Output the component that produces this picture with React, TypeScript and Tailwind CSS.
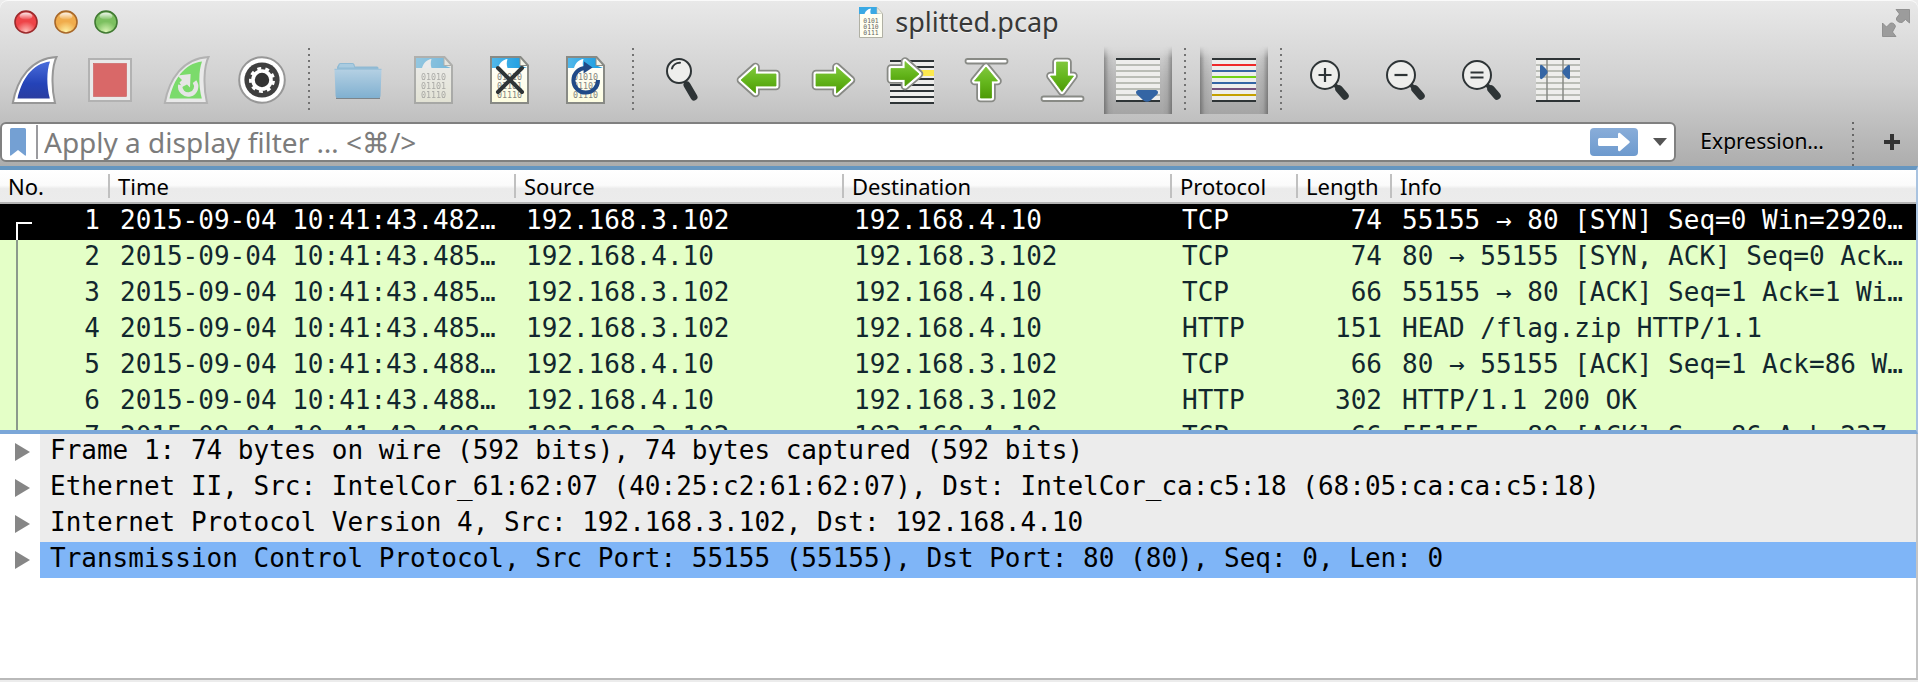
import React from "react";

type IconProps = { className?: string };

function Svg({ children, className = "size-12" }: { children: React.ReactNode; className?: string }) {
  return (
    <svg viewBox="0 0 48 48" className={className} aria-hidden="true">
      {children}
    </svg>
  );
}

const FIN_OUTER = "M2.8 47 C7 23 21 2.5 46.5 1 C42 10 41 30 45 47 Z";
const FIN_INNER = "M7.5 42.5 C11.5 24 22 7.5 40 5.5 C36.5 15 36.5 30 39.8 42.5 Z";

function StartIcon() {
  return (
    <Svg>
      <defs>
        <linearGradient id="fin-blue" x1="0" y1="0" x2="0" y2="1">
          <stop offset="0" stopColor="#4a6ddb" />
          <stop offset="0.6" stopColor="#2443b8" />
          <stop offset="1" stopColor="#2a3da0" />
        </linearGradient>
      </defs>
      <path d={FIN_OUTER} fill="#fff" stroke="#979797" strokeWidth="2" />
      <path d={FIN_INNER} fill="url(#fin-blue)" />
    </Svg>
  );
}

function StopIcon() {
  return (
    <Svg>
      <rect x="3" y="3" width="42" height="42" fill="#e9e9e9" stroke="#b2b2b2" strokeWidth="2" />
      <rect x="7.5" y="7.5" width="33" height="33" fill="#d96868" stroke="#c95a5a" strokeWidth="0.6" />
    </Svg>
  );
}

function RestartIcon() {
  return (
    <Svg>
      <path d={FIN_OUTER} fill="#e9e9e9" stroke="#b2b2b2" strokeWidth="2" />
      <path d={FIN_INNER} fill="#7bdb6b" />
      <path d="M32.5 25.6 A8 8 0 1 1 18.3 29" fill="none" stroke="#e6e6e6" strokeWidth="4.4" />
      <path d="M15.5 19.5 L28.6 18 L28 31.5 L25 28.5 L20 31 L17.5 26.5 L20 24 Z" fill="#e6e6e6" />
    </Svg>
  );
}

function OptionsIcon() {
  return (
    <Svg>
      <circle cx="24" cy="24" r="22.8" fill="#fff" stroke="#979797" strokeWidth="2" />
      <circle cx="24" cy="24" r="17.6" fill="#3f3f3f" />
      <circle cx="24" cy="24" r="9" fill="#333" stroke="#fff" strokeWidth="3.6" />
      <circle cx="24" cy="24" r="11.6" fill="none" stroke="#fff" strokeWidth="2.8" strokeDasharray="3.9 4.2" strokeDashoffset="-1" />
    </Svg>
  );
}

function FolderIcon() {
  return (
    <Svg>
      <defs>
        <linearGradient id="folder-front" x1="0" y1="0" x2="0" y2="1">
          <stop offset="0" stopColor="#b4d0e3" />
          <stop offset="1" stopColor="#80b0d0" />
        </linearGradient>
      </defs>
      <path d="M2 41.5 H46 V43 H2 Z" fill="#7d8489" />
      <path d="M3 18 V11 L5 7.5 Q5.5 7 6.5 7 H18.5 Q20 7 20.5 8.5 L21 10.5 H43 Q44.5 10.5 44.5 12 V18 Z" fill="#8fbad4" />
      <path d="M4.5 11.5 L6 8 H19 L20.5 11.5 Z" fill="#a9cbe0" />
      <path d="M0.5 13.5 H47.5 L46.5 40 Q46.5 42 44.5 42 H3.5 Q1.7 42 1.6 40 Z" fill="url(#folder-front)" />
      <path d="M0.5 13.3 H47.5" stroke="#9ec3da" strokeWidth="1.2" />
    </Svg>
  );
}

function DocBase({ id }: { id: string }) {
  return (
    <>
      <defs>
        <linearGradient id={id + "-sky"} x1="0" y1="0" x2="1" y2="0">
          <stop offset="0" stopColor="#52b8ea" />
          <stop offset="1" stopColor="#189be0" />
        </linearGradient>
        <linearGradient id={id + "-page"} x1="0" y1="0" x2="0" y2="1">
          <stop offset="0" stopColor="#ffffff" />
          <stop offset="1" stopColor="#fdfde0" />
        </linearGradient>
      </defs>
      <path d="M5 1 H34.5 L42 9.5 V47 H5 Z" fill={"url(#" + id + "-page)"} />
      <path d="M6 2 H34 L34.5 9.5 L41 12 H6 Z" fill={"url(#" + id + "-sky)"} />
      <path d="M12 12 C13.5 7 17 3.5 21.5 3 C20.5 6 20.5 9 21.5 12 Z" fill="#fff" />
      <path d="M34 1.5 V9.5 H41.5 Z" fill="#f4f4e8" />
      <path d="M34 2 V9.5 H41.5" fill="none" stroke="#888a85" strokeWidth="1" />
      <path d="M5 1 H34.5 L42 9.5 V47 H5 Z" fill="none" stroke="#888a85" strokeWidth="2" />
      <g fill="#85857e" fontFamily="'DejaVu Sans Mono', monospace" fontSize="8.4" textAnchor="middle">
        <text x="23.5" y="24">01010</text>
        <text x="23.5" y="33">01101</text>
        <text x="23.5" y="42">01110</text>
      </g>
    </>
  );
}

function SaveIcon() {
  return (
    <Svg>
      <g opacity="0.5">
        <DocBase id="save" />
      </g>
    </Svg>
  );
}

function CloseFileIcon() {
  return (
    <Svg>
      <DocBase id="close" />
      <path d="M12 12 L36 36 M36 12 L12 36" stroke="#2e3436" strokeWidth="4" strokeLinecap="round" />
    </Svg>
  );
}

function ReloadIcon() {
  return (
    <Svg>
      <DocBase id="reload" />
      <path d="M36 24 A12.3 12.3 0 1 1 24 12" fill="none" stroke="#204a87" strokeWidth="4" />
      <path d="M22 5.5 L30.5 11.5 L21.5 17.5 Z" fill="#204a87" />
    </Svg>
  );
}

function FindIcon() {
  return (
    <Svg>
      <path d="M29 29 L36 41" stroke="#2e3436" strokeWidth="7" strokeLinecap="round" />
      <path d="M26 24 L29 30" stroke="#2e3436" strokeWidth="3" />
      <circle cx="21" cy="15" r="12" fill="#eeeeec" stroke="#2e3436" strokeWidth="2" />
      <path d="M14 12.5 A8 8 0 0 1 22 6.8" fill="none" stroke="#2e3436" strokeWidth="2" strokeLinecap="round" />
    </Svg>
  );
}

function Green() {
  return (
    <defs>
      <linearGradient id="green" x1="0" y1="0" x2="0" y2="1">
        <stop offset="0" stopColor="#80c63c" />
        <stop offset="0.5" stopColor="#64b61c" />
        <stop offset="1" stopColor="#4e9a06" />
      </linearGradient>
    </defs>
  );
}

function ArrowShape({ d }: { d: string }) {
  return (
    <>
      <Green />
      <path d={d} fill="#888a85" stroke="#888a85" strokeWidth="8.6" strokeLinejoin="round" />
      <path d={d} fill="#fff" stroke="#fff" strokeWidth="5" strokeLinejoin="round" />
      <path d={d} fill="url(#green)" stroke="url(#green)" strokeWidth="0.8" strokeLinejoin="round" />
    </>
  );
}

function BackIcon() {
  return (
    <Svg>
      <ArrowShape d="M7 24 L21.5 11 V18 H42 V30 H21.5 V37 Z" />
    </Svg>
  );
}

function ForwardIcon() {
  return (
    <Svg>
      <ArrowShape d="M41 24 L26.5 11 V18 H6 V30 H26.5 V37 Z" />
    </Svg>
  );
}

function GoToIcon() {
  return (
    <Svg>
      <rect x="4" y="4" width="44" height="44" fill="#eeeeec" />
      <rect x="24" y="14" width="24" height="6" fill="#fce94f" />
      <path d="M4 5 H48 M4 11 H48 M4 23 H48 M4 29 H48 M4 35 H48 M4 41 H48 M4 47 H48" stroke="#2e3436" strokeWidth="2" />
      <ArrowShape d="M33 18 L19 5.5 V12.5 H5 V23.5 H19 V30 Z" />
    </Svg>
  );
}

function FirstIcon() {
  return (
    <Svg>
      <rect x="3.5" y="3" width="42" height="4.5" rx="2.2" fill="#fff" stroke="#888a85" strokeWidth="1.8" />
      <ArrowShape d="M24 11 L12.5 25 H18.5 V42 H29.5 V25 H35.5 Z" />
    </Svg>
  );
}

function LastIcon() {
  return (
    <Svg>
      <rect x="3.5" y="40.5" width="42" height="4.5" rx="2.2" fill="#fff" stroke="#888a85" strokeWidth="1.8" />
      <ArrowShape d="M24 35.5 L12.5 20 H18.5 V6 H29.5 V20 H35.5 Z" />
    </Svg>
  );
}

function AutoScrollIcon() {
  return (
    <Svg>
      <rect x="2" y="2" width="44" height="44" fill="#eeeeec" />
      <path d="M2 9 H46 M2 15 H46 M2 21 H46 M2 27 H46 M2 33 H46 M2 39 H46" stroke="#babdb6" strokeWidth="2" />
      <path d="M2 3 H46 M2 45 H46" stroke="#2e3436" strokeWidth="2" />
      <path d="M24 34 H42 Q45 35 43.5 38 L36.5 44.5 Q33 47 29.5 44.5 L22.5 38 Q21 35 24 34 Z" fill="#3465a4" />
    </Svg>
  );
}

const RULES = [
  { y: 3, color: "#2e3436" },
  { y: 9, color: "#ef2929" },
  { y: 15, color: "#3465a4" },
  { y: 21, color: "#73d216" },
  { y: 27, color: "#3465a4" },
  { y: 33, color: "#75507b" },
  { y: 39, color: "#c4a000" },
  { y: 45, color: "#2e3436" },
];

function ColorizeIcon() {
  return (
    <Svg>
      <rect x="2" y="2" width="44" height="44" fill="#eeeeec" />
      {RULES.map((r) => (
        <path key={r.y} d={"M2 " + r.y + " H46"} stroke={r.color} strokeWidth="2" />
      ))}
    </Svg>
  );
}

function ZoomIcon({ mark }: { mark: string }) {
  return (
    <Svg>
      <path d="M33 33 L39 40" stroke="#2e3436" strokeWidth="7.5" strokeLinecap="round" />
      <path d="M28 28 L33 33" stroke="#2e3436" strokeWidth="4" />
      <circle cx="19" cy="19" r="14" fill="#eeeeec" stroke="#2e3436" strokeWidth="2" />
      <path d={mark} stroke="#2e3436" strokeWidth="2.2" />
    </Svg>
  );
}

function ResizeIcon() {
  return (
    <Svg>
      <rect x="2" y="2" width="44" height="44" fill="#eeeeec" />
      <path d="M2 9 H46 M2 15 H46 M2 21 H46 M2 27 H46 M2 33 H46 M2 39 H46" stroke="#babdb6" strokeWidth="2" />
      <path d="M13 2 V46 M29 2 V46" stroke="#888a85" strokeWidth="1.5" />
      <path d="M2 3 H46 M2 45 H46" stroke="#2e3436" strokeWidth="2" />
      <path d="M6 10 Q6.5 8 8.5 9.5 Q11.5 12 13.5 15 V17 Q11.5 20 8.5 22.5 Q6.5 24 6 22 Z" fill="#3465a4" />
      <path d="M36 10 Q35.5 8 33.5 9.5 Q30.5 12 28.5 15 V17 Q30.5 20 33.5 22.5 Q35.5 24 36 22 Z" fill="#3465a4" />
    </Svg>
  );
}

function TitleDocIcon({ className }: IconProps) {
  return (
    <svg viewBox="0 0 24 31" className={className} aria-hidden="true">
      <path d="M0.5 0.5 H18 L23.5 6.5 V30.5 H0.5 Z" fill="#fffff2" stroke="#b0b0a4" strokeWidth="1" />
      <path d="M0 0 H18 V6 L22 7 H0 Z" fill="#3aa9e4" />
      <path d="M5.5 7 C6.5 4 9 2 12 1.6 C11.2 3.5 11.2 5.3 11.8 7 Z" fill="#fff" />
      <path d="M18 0.5 V6.5 H23.5 Z" fill="#f0f0e4" stroke="#c4c4b8" strokeWidth="0.6" />
      <g fill="#66665f" fontFamily="'DejaVu Sans Mono', monospace" fontSize="6.4" textAnchor="middle">
        <text x="12" y="15.5">0101</text>
        <text x="12" y="21.5">0110</text>
        <text x="12" y="27.5">0111</text>
      </g>
    </svg>
  );
}

function TrafficLight({ label, edge, mid, glow, id }: { label: string; edge: string; mid: string; glow: string; id: string }) {
  return (
    <button type="button" aria-label={label} className="size-6">
      <svg viewBox="0 0 24 24" className="size-6" aria-hidden="true">
        <defs>
          <radialGradient id={id} cx="0.5" cy="0.95" r="0.95">
            <stop offset="0" stopColor={glow} />
            <stop offset="0.5" stopColor={mid} />
            <stop offset="0.85" stopColor={mid} />
            <stop offset="1" stopColor={edge} />
          </radialGradient>
          <linearGradient id={id + "-gloss"} x1="0" y1="0" x2="0" y2="1">
            <stop offset="0" stopColor="#fff" stopOpacity="0.9" />
            <stop offset="1" stopColor="#fff" stopOpacity="0.05" />
          </linearGradient>
        </defs>
        <circle cx="12" cy="12" r="11" fill={"url(#" + id + ")"} stroke={edge} strokeWidth="1.6" />
        <ellipse cx="12" cy="6" rx="6.5" ry="3.6" fill={"url(#" + id + "-gloss)"} />
      </svg>
    </button>
  );
}

function ToolButton({ label, pressed = false, children }: { label: string; pressed?: boolean; children: React.ReactNode }) {
  return (
    <button
      type="button"
      aria-label={label}
      aria-pressed={pressed}
      className={
        pressed
          ? "flex h-17 w-17 shrink-0 items-center justify-center bg-[linear-gradient(to_right,#0000004d,#0000000d_7%,transparent_14%,transparent_86%,#0000000d_93%,#0000004d),linear-gradient(to_bottom,transparent,#b9b9b9_45%,#a5a5a5)] [mask-image:linear-gradient(to_bottom,transparent,black_18%)]"
          : "flex h-17 w-17 shrink-0 items-center justify-center"
      }
    >
      {children}
    </button>
  );
}

function Separator() {
  return (
    <div className="flex h-17 w-3 shrink-0 pt-0.5 pl-1">
      <div className="h-[62px] w-0.5 bg-[repeating-linear-gradient(to_bottom,#737373_0_2px,transparent_2px_6px)]" />
    </div>
  );
}

const COLUMNS = [
  { title: "No.", width: "w-[110px]" },
  { title: "Time", width: "w-[406px]" },
  { title: "Source", width: "w-[328px]" },
  { title: "Destination", width: "w-[328px]" },
  { title: "Protocol", width: "w-[126px]" },
  { title: "Length", width: "w-[94px]" },
  { title: "Info", width: "" },
];

const A = "192.168.3.102";
const B = "192.168.4.10";

const PACKETS = [
  { no: 1, time: "2015-09-04 10:41:43.482…", src: A, dst: B, proto: "TCP", len: 74, info: "55155 → 80 [SYN] Seq=0 Win=2920…" },
  { no: 2, time: "2015-09-04 10:41:43.485…", src: B, dst: A, proto: "TCP", len: 74, info: "80 → 55155 [SYN, ACK] Seq=0 Ack…" },
  { no: 3, time: "2015-09-04 10:41:43.485…", src: A, dst: B, proto: "TCP", len: 66, info: "55155 → 80 [ACK] Seq=1 Ack=1 Wi…" },
  { no: 4, time: "2015-09-04 10:41:43.485…", src: A, dst: B, proto: "HTTP", len: 151, info: "HEAD /flag.zip HTTP/1.1" },
  { no: 5, time: "2015-09-04 10:41:43.488…", src: B, dst: A, proto: "TCP", len: 66, info: "80 → 55155 [ACK] Seq=1 Ack=86 W…" },
  { no: 6, time: "2015-09-04 10:41:43.488…", src: B, dst: A, proto: "HTTP", len: 302, info: "HTTP/1.1 200 OK" },
  { no: 7, time: "2015-09-04 10:41:43.488…", src: A, dst: B, proto: "TCP", len: 66, info: "55155 → 80 [ACK] Seq=86 Ack=237…" },
];

const DETAILS = [
  "Frame 1: 74 bytes on wire (592 bits), 74 bytes captured (592 bits)",
  "Ethernet II, Src: IntelCor_61:62:07 (40:25:c2:61:62:07), Dst: IntelCor_ca:c5:18 (68:05:ca:ca:c5:18)",
  "Internet Protocol Version 4, Src: 192.168.3.102, Dst: 192.168.4.10",
  "Transmission Control Protocol, Src Port: 55155 (55155), Dst Port: 80 (80), Seq: 0, Len: 0",
];

function TitleBar() {
  return (
    <header className="grid h-[46px] grid-cols-[1fr_auto_1fr] items-start">
      <div className="flex gap-4 pt-2.5 pl-3.5">
        <TrafficLight id="light-close" label="Close" edge="#9c2a2c" mid="#ee4448" glow="#ffc2bd" />
        <TrafficLight id="light-min" label="Minimize" edge="#a8682a" mid="#f0ac4c" glow="#fff3a6" />
        <TrafficLight id="light-zoom" label="Zoom" edge="#417a33" mid="#7cc060" glow="#dcf7b8" />
      </div>
      <div className="flex items-start gap-3">
        <TitleDocIcon className="mt-[7px] h-[31px] w-6" />
        <h1 className="pt-1 text-[27px] leading-9 text-[#383838] [text-shadow:0_1px_0_#ffffff99]">splitted.pcap</h1>
      </div>
      <div className="flex justify-end pt-[9px] pr-2">
        <button type="button" aria-label="Enter full screen" className="size-7">
          <svg viewBox="0 0 28 28" className="size-7" aria-hidden="true">
            <g fill="#9c9c9c" stroke="#858585" strokeWidth="0.8">
              <path d="M14 0.5 H27.5 V14 L23.5 10.5 L20 13.5 Q16 14 14.5 11 L14.5 9 L17.5 5 Z" />
              <path d="M0.5 14 L4.5 18 L8.5 14 Q12.5 13.5 13.5 17.5 L10.5 23 L14 27.5 H0.5 Z" />
            </g>
          </svg>
        </button>
      </div>
    </header>
  );
}

function Toolbar() {
  return (
    <div role="toolbar" aria-label="Main toolbar" className="flex h-[76px] items-start gap-2 overflow-hidden">
      <ToolButton label="Start capture"><StartIcon /></ToolButton>
      <ToolButton label="Stop capture"><StopIcon /></ToolButton>
      <ToolButton label="Restart capture"><RestartIcon /></ToolButton>
      <ToolButton label="Capture options"><OptionsIcon /></ToolButton>
      <Separator />
      <ToolButton label="Open file"><FolderIcon /></ToolButton>
      <ToolButton label="Save file"><SaveIcon /></ToolButton>
      <ToolButton label="Close file"><CloseFileIcon /></ToolButton>
      <ToolButton label="Reload file"><ReloadIcon /></ToolButton>
      <Separator />
      <ToolButton label="Find packet"><FindIcon /></ToolButton>
      <ToolButton label="Go back"><BackIcon /></ToolButton>
      <ToolButton label="Go forward"><ForwardIcon /></ToolButton>
      <ToolButton label="Go to packet"><GoToIcon /></ToolButton>
      <ToolButton label="First packet"><FirstIcon /></ToolButton>
      <ToolButton label="Last packet"><LastIcon /></ToolButton>
      <ToolButton label="Auto scroll" pressed><AutoScrollIcon /></ToolButton>
      <Separator />
      <ToolButton label="Colorize packets" pressed><ColorizeIcon /></ToolButton>
      <Separator />
      <ToolButton label="Zoom in"><ZoomIcon mark="M12.5 19 H25.5 M19 12 V26" /></ToolButton>
      <ToolButton label="Zoom out"><ZoomIcon mark="M12.5 19 H25.5" /></ToolButton>
      <ToolButton label="Normal size"><ZoomIcon mark="M12.5 16.5 H25.5 M12.5 21.5 H25.5" /></ToolButton>
      <ToolButton label="Resize columns"><ResizeIcon /></ToolButton>
    </div>
  );
}

function FilterBar() {
  return (
    <div className="flex h-11 items-start">
      <div className="flex h-10 min-w-0 flex-1 items-center rounded-md border-2 border-[#808080] bg-white">
        <button type="button" aria-label="Filter bookmarks" className="flex h-[34px] w-9 shrink-0 items-center border-r-2 border-[#9b9b9f] pl-2">
          <svg viewBox="0 0 16 28" className="h-7 w-4" aria-hidden="true">
            <path d="M1.5 0 H14.5 Q16 0 16 1.5 V27 Q16 28 15 27.5 L8 22 L1 27.5 Q0 28 0 27 V1.5 Q0 0 1.5 0 Z" fill="#74a0d3" />
          </svg>
        </button>
        <input
          type="text"
          aria-label="Display filter"
          placeholder="Apply a display filter … <⌘/>"
          className="h-9 min-w-0 flex-1 bg-transparent px-1.5 text-[28px] text-black outline-none placeholder:text-[#7c7c7c]"
        />
        <button type="button" aria-label="Apply filter" className="flex h-7 w-12 shrink-0 items-center justify-center rounded bg-linear-to-b from-[#89add9] to-[#6d9ace]">
          <svg viewBox="0 0 32 20" className="h-5 w-8" aria-hidden="true">
            <path d="M1.5 6 H20 V2 Q20.5 0 22 1 L31.5 9.2 Q32 10 31.5 10.800 L22 19 Q20.5 20 20 18 V14 H1.5 Q0 14 0 12.5 V7.5 Q0 6 1.5 6 Z" fill="#fff" />
          </svg>
        </button>
        <button type="button" aria-label="Recent filters" className="flex h-9 w-9 shrink-0 items-center justify-center pl-2">
          <svg viewBox="0 0 14 8" className="h-2 w-3.5" aria-hidden="true">
            <path d="M0 0 H14 L7 8 Z" fill="#555" />
          </svg>
        </button>
      </div>
      <button type="button" className="h-10 px-6 text-[21px] text-black [text-shadow:0_1px_0_#ffffff66]">Expression…</button>
      <div className="ml-1 h-11 w-0.5 bg-[repeating-linear-gradient(to_bottom,#666_0_2px,transparent_2px_6px)]" />
      <button type="button" aria-label="Add filter button" className="flex h-10 w-16 items-center justify-center pl-3">
        <svg viewBox="0 0 16 16" className="size-4" aria-hidden="true">
          <path d="M8 0 V16 M0 8 H16" stroke="#333" strokeWidth="4" />
        </svg>
      </button>
    </div>
  );
}

function PacketTable() {
  return (
    <section aria-label="Packet list" className="flex min-h-0 flex-[260_1_0%] flex-col overflow-hidden border-y-4 border-r-2 border-t-[#6696c0] border-r-[#a9c3e0] border-b-[#7ba7d8]">
      <table className="w-full table-fixed border-collapse">
        <thead>
          <tr className="h-[34px] bg-[linear-gradient(to_bottom,#fff_0%,#fbfbfb_45%,#ebebeb_55%,#ececec_100%)]">
            {COLUMNS.map((c, i) => (
              <th key={c.title} scope="col" className={"p-0 text-left text-[22px] leading-6 font-normal text-black " + c.width}>
                <div className="border-b-2 border-[#b4b4b4] py-1">
                  <div className={i < COLUMNS.length - 1 ? "border-r-2 border-[#c0c0c0] pl-2 whitespace-nowrap" : "pl-2"}>{c.title}</div>
                </div>
              </th>
            ))}
          </tr>
        </thead>
        <tbody className="font-['DejaVu_Sans_Mono',monospace] text-[26px] whitespace-pre">
          {PACKETS.map((p, i) => (
            <tr key={p.no} className={i === 0 ? "h-9 bg-black text-white" : "h-9 bg-[#e4ffc7] text-[#12272e]"}>
              <td className="p-0">
                <div className="flex h-9 items-end justify-between pr-2.5 pl-4">
                  <span className={i === 0 ? "h-[18px] w-4 border-t-2 border-l-2 border-white" : "h-9 w-4 border-l-2 border-[#8b9a8b]"} />
                  <span className="h-9 leading-8">{p.no}</span>
                </div>
              </td>
              <td className="p-0 pl-2.5 align-top leading-8">{p.time}</td>
              <td className="p-0 pl-2.5 align-top leading-8">{p.src}</td>
              <td className="p-0 pl-2.5 align-top leading-8">{p.dst}</td>
              <td className="p-0 pl-2.5 align-top leading-8">{p.proto}</td>
              <td className="p-0 pr-2.5 text-right align-top leading-8">{p.len}</td>
              <td className="overflow-hidden p-0 pl-2.5 align-top leading-8">{p.info}</td>
            </tr>
          ))}
        </tbody>
      </table>
    </section>
  );
}

function DetailTree() {
  return (
    <section aria-label="Packet details" className="min-h-0 flex-[244_1_0%] overflow-hidden border-r-2 border-b-2 border-r-[#c4c4c4] border-b-[#b9b9b9] bg-white">
      <ul className="font-['DejaVu_Sans_Mono',monospace] text-[26px] leading-8 text-black">
        {DETAILS.map((line, i) => (
          <li key={line} className="flex h-9">
            <button type="button" aria-label="Expand" className="flex w-10 shrink-0 items-center pl-[15px]">
              <svg viewBox="0 0 15 18" className="h-[18px] w-[15px]" aria-hidden="true">
                <path d="M0 0 L15 9 L0 18 Z" fill="#868686" />
              </svg>
            </button>
            <span className={i === 3 ? "flex-1 bg-[#7fb5f7] pl-2.5 whitespace-nowrap" : "flex-1 bg-[#ececec] pl-2.5 whitespace-nowrap"}>{line}</span>
          </li>
        ))}
      </ul>
    </section>
  );
}

export default function App() {
  return (
    <main className="flex h-screen flex-col overflow-hidden bg-[#ececec] pb-0.5 font-['Noto_Sans','DejaVu_Sans',sans-serif]">
      <div className="rounded-t-lg bg-linear-to-b from-[#e9e9e9] via-[#d0d0d0] to-[#adadad] shadow-[inset_0_1px_0_#fafafa]">
        <TitleBar />
        <Toolbar />
        <FilterBar />
      </div>
      <PacketTable />
      <DetailTree />
    </main>
  );
}
